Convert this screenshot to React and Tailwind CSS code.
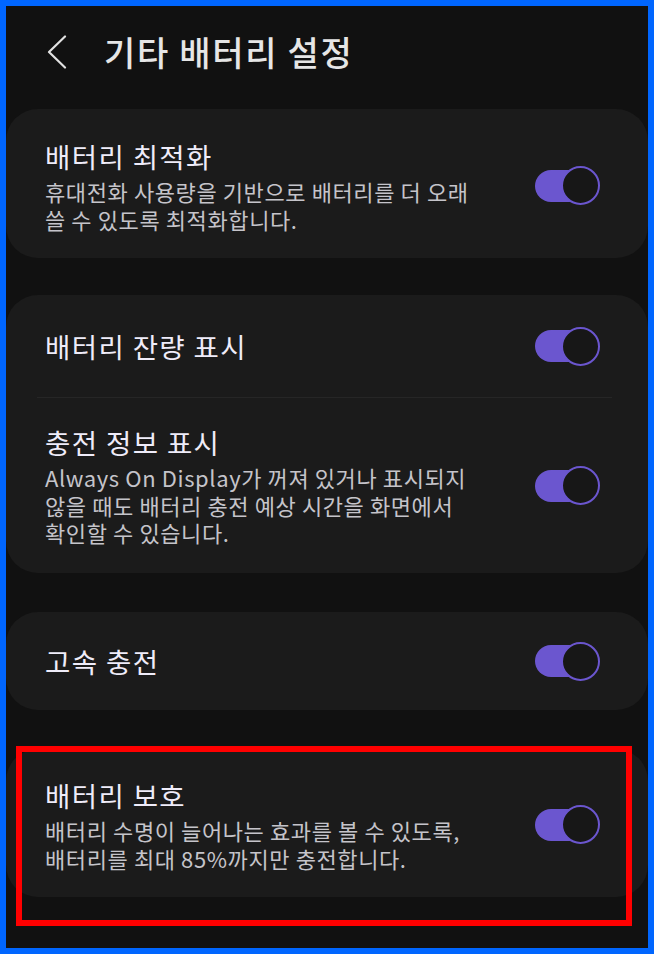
import React from 'react';

const FONT = { fontFamily: '"Noto Sans CJK KR", "Noto Sans", sans-serif' };

// 토글 스위치 (켜짐 상태)
const Toggle = () => (
  <div className="relative w-[65px] h-[39px] shrink-0">
    <div className="absolute left-0 top-[3.5px] w-[50px] h-[32px] rounded-full bg-[#6b56cf]" />
    <div className="absolute right-0 top-0 w-[39px] h-[39px] rounded-full border-[2.5px] border-[#6b56cf] bg-[#171717]" />
  </div>
);

const Row = ({ title, lines, className = '' }) => (
  <div className={`flex items-center pl-[39px] pr-[48px] ${className}`}>
    <div className="flex-1">
      <div className="text-[27.5px] leading-[36px] tracking-[1.4px] text-[#efecf9]">{title}</div>
      {lines && (
        <div className="mt-[4px] text-[22px] leading-[27.5px] tracking-[0.6px] text-[#c5c4ca]">
          {lines.map((l) => (
            <div key={l} className="whitespace-nowrap">{l}</div>
          ))}
        </div>
      )}
    </div>
    <Toggle />
  </div>
);

export default function App() {
  return (
    <div
      style={FONT}
      className="relative w-[654px] h-[954px] overflow-hidden border-[6px] border-[#0066ff] bg-[#111111]"
    >
      {/* 헤더 */}
      <div className="h-[92px] flex items-center">
        <svg className="ml-[41px] w-[20px] h-[34px]" viewBox="0 0 20 34" fill="none">
          <path d="M18 1.5 L2 17 L18 32.5" stroke="#e2e2e2" strokeWidth="2.2" strokeLinecap="round" strokeLinejoin="round" />
        </svg>
        <h1 className="ml-[37px] text-[34px] font-medium tracking-[1.7px] text-[#e6e6e6] leading-none">기타 배터리 설정</h1>
      </div>

      <div className="mt-[11px] flex flex-col">
        <div className="h-[149px] rounded-[32px] bg-[#1b1b1b] pt-[29px]">
          <Row
            title="배터리 최적화"
            lines={['휴대전화 사용량을 기반으로 배터리를 더 오래', '쓸 수 있도록 최적화합니다.']}
          />
        </div>

        <div className="mt-[37px] h-[278px] rounded-[32px] bg-[#1b1b1b] flex flex-col">
          <Row title="배터리 잔량 표시" className="h-[102px]" />
          <div className="h-px ml-[31px] mr-[36px] bg-[#262626]" />
          <Row
            title="충전 정보 표시"
            lines={[
              'Always On Display가 꺼져 있거나 표시되지',
              '않을 때도 배터리 충전 예상 시간을 화면에서',
              '확인할 수 있습니다.',
            ]}
            className="flex-1"
          />
        </div>

        <div className="mt-[39px] h-[98px] rounded-[32px] bg-[#1b1b1b] flex flex-col">
          <Row title="고속 충전" className="h-full" />
        </div>

        <div className="mt-[39px] h-[148px] rounded-[32px] bg-[#1b1b1b] pt-[28px]">
          <Row
            title="배터리 보호"
            lines={['배터리 수명이 늘어나는 효과를 볼 수 있도록,', '배터리를 최대 85%까지만 충전합니다.']}
          />
        </div>
      </div>

      {/* 강조 표시 */}
      <div className="absolute left-[10px] top-[740px] w-[616px] h-[180px] border-[6px] border-[#ff0000] pointer-events-none" />
    </div>
  );
}
